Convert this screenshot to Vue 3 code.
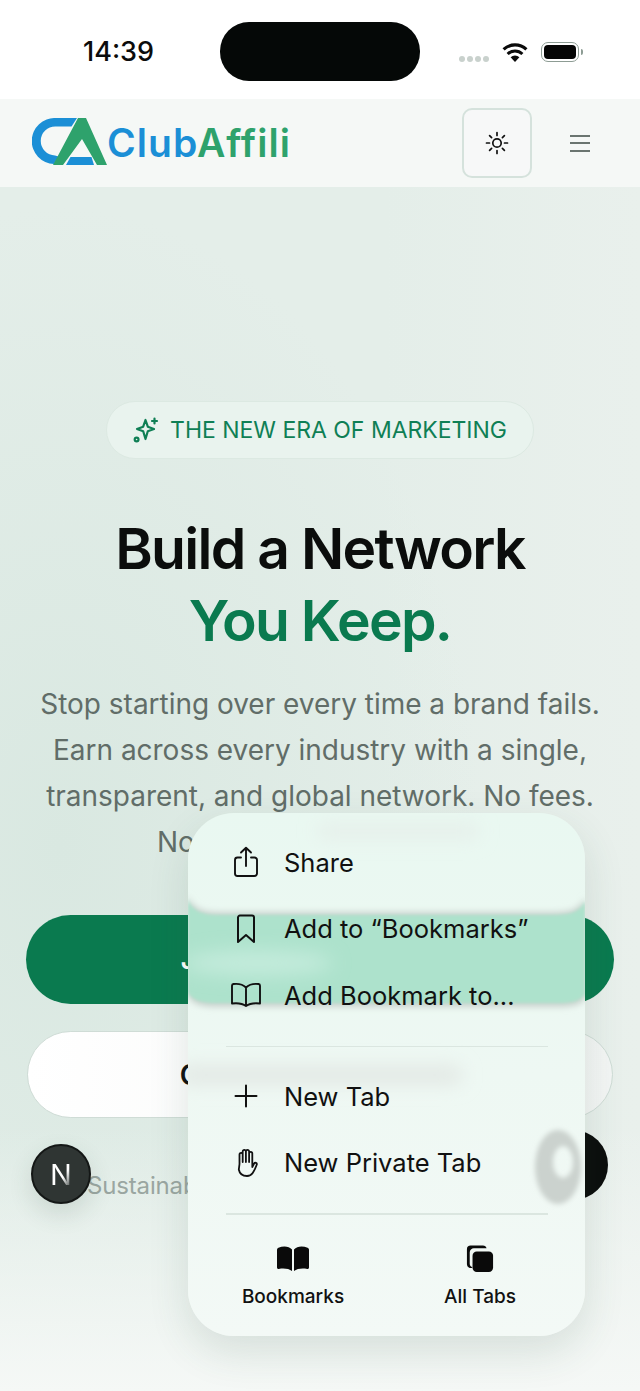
<script setup>
const topActions = [
  { id: "share", label: "Share" },
  { id: "bookmark", label: "Add to “Bookmarks”" },
  { id: "book", label: "Add Bookmark to..." },
];
const tabActions = [
  { id: "plus", label: "New Tab" },
  { id: "hand", label: "New Private Tab" },
];
</script>

<template>
  <div class="screen">
    <div class="status-bar">
      <span class="clock">14:39</span>
      <div class="island"></div>
      <div class="status-icons">
        <div class="signal"><i></i><i></i><i></i><i></i></div>
        <svg class="wifi" viewBox="0 0 26 20" width="26" height="20">
          <path d="M13 20 8.6 15.2a6.4 6.4 0 0 1 8.8 0Z" fill="#0a0a0a" />
          <path d="M5.6 12a10.8 10.8 0 0 1 14.8 0" fill="none" stroke="#0a0a0a" stroke-width="3" />
          <path d="M1.6 7.4a16.8 16.8 0 0 1 22.8 0" fill="none" stroke="#0a0a0a" stroke-width="3.2" />
        </svg>
        <div class="battery"><span></span></div>
        <div class="battery-nub"></div>
      </div>
    </div>

    <header class="nav">
      <div class="brand">
        <svg class="brand-mark" viewBox="32 119 76 47" width="76" height="47">
          <path d="M77 119 71.5 127.5H55.5A14.5 14.5 0 0 0 55 156.5L58.5 157.5 54 165A23 23 0 0 1 55.5 119Z" fill="#1b8fd6" />
          <path d="M78 119H86L107 166H97L82 140 63 166H53Z" fill="#2ea26c" />
          <path d="M70.5 158H91.5L94 166H66Z" fill="#1b8fd6" />
        </svg>
        <span class="brand-name"><span class="blue">Club</span><span class="green">Affili</span></span>
      </div>
      <div class="nav-actions">
        <button class="theme-btn">
          <svg viewBox="0 0 24 24" width="24" height="24" fill="none" stroke="#111" stroke-width="1.7" stroke-linecap="round">
            <circle cx="12" cy="12" r="4.2" />
            <path d="M12 1.5v3M12 19.5v3M1.5 12h3M19.5 12h3M4.6 4.6l2 2M17.4 17.4l2 2M4.6 19.4l2-2M17.4 6.6l2-2" />
          </svg>
        </button>
        <div class="burger"><i></i><i></i><i></i></div>
      </div>
    </header>

    <main class="hero">
      <div class="pill">
        <svg viewBox="0 0 26 26" width="26" height="26" fill="none" stroke="#0f7f55" stroke-width="2.2" stroke-linecap="round" stroke-linejoin="round">
          <path d="M12.500 3 14.800 9.700 21 12l-6.200 2.300L12.500 22l-2.300-7.700L4 12l6.200-2.300Z" />
          <path d="M21.500 1.500v5M19 4h5" />
          <circle cx="3.600" cy="22.500" r="1.900" />
        </svg>
        <span>THE NEW ERA OF MARKETING</span>
      </div>

      <h1>Build a Network<br /><em>You Keep.</em></h1>

      <p class="lead">
        Stop starting over every time a brand fails.<br />
        Earn across every industry with a single,<br />
        transparent, and global network. No fees.<br />
        No hidden requirements.
      </p>

      <div class="cta cta-primary">Join the Network Now</div>
      <div class="cta cta-secondary">Create Your Account</div>
      <p class="foot">Sustainable income for every new creator</p>
    </main>

    <div class="next-badge"><span>N</span></div>
    <div class="round-fab"></div>

    <div class="menu">
      <svg class="menu-glass" viewBox="0 0 397 523" width="397" height="523">
        <defs>
          <filter id="soft1"><feGaussianBlur stdDeviation="1.4" /></filter>
          <filter id="soft2" x="-20%" y="-20%" width="140%" height="140%"><feGaussianBlur stdDeviation="2.500" /></filter>
          <filter id="soft3" x="-20%" y="-20%" width="140%" height="140%"><feGaussianBlur stdDeviation="3" /></filter>
          <filter id="soft9" x="-30%" y="-300%" width="160%" height="700%"><feGaussianBlur stdDeviation="9" /></filter>
        </defs>
        <rect x="130" y="10" width="160" height="16" fill="#e6efea" filter="url(#soft9)" />
        <path d="M0 82C4 95 14 99 30 99H365C385 99 392 95 397 84V186C392 192 385 194 370 194H30C14 194 6 192 0 184Z" fill="#c9d3ce" filter="url(#soft3)" />
        <path d="M0 86C4 98 14 102 30 102H365C385 102 392 98 397 88V181C392 188 385 190 370 190H30C14 190 6 188 0 180Z" fill="#ade2cc" filter="url(#soft1)" />
        <ellipse cx="70" cy="150" rx="75" ry="13" fill="#c3ebdb" filter="url(#soft9)" />
        <rect x="-10" y="252" width="285" height="20" rx="10" fill="#e3e9e5" filter="url(#soft9)" />
        <path d="M370 317a23 37 0 1 1-.01 0ZM375 333a10 16 0 1 0 .01 0Z" fill="#cbd2ce" fill-rule="evenodd" filter="url(#soft2)" />
      </svg>

      <div class="menu-body">
        <div class="menu-group">
          <div v-for="item in topActions" :key="item.id" class="menu-row">
            <span class="menu-icon">
              <svg v-if="item.id === 'share'" viewBox="0 0 30 32" width="30" height="32" fill="none" stroke="#111" stroke-width="1.9" stroke-linecap="round" stroke-linejoin="round">
                <path d="M10 11.5H6.5A2.5 2.5 0 0 0 4 14v13.5A2.5 2.5 0 0 0 6.5 30h17a2.5 2.5 0 0 0 2.5-2.5V14a2.500 2.500 0 0 0-2.500-2.500H20" />
                <path d="M15 20V2M10 6.500 15 1.800l5 4.700" />
              </svg>
              <svg v-else-if="item.id === 'bookmark'" viewBox="0 0 20 30" width="20" height="30" fill="none" stroke="#111" stroke-width="2" stroke-linejoin="round">
                <path d="M2 3.500A2 2 0 0 1 4 1.500h12a2 2 0 0 1 2 2V28l-8-7-8 7Z" />
              </svg>
              <svg v-else viewBox="0 0 32 26" width="32" height="26" fill="none" stroke="#111" stroke-width="1.900" stroke-linejoin="round" stroke-linecap="round">
                <path d="M16 5.500C13 2.500 8 1.500 3.500 2 2.500 2.100 2 2.800 2 3.800V21.500c4.500-.5 10-.5 14 2.500 4-3 9.500-3 14-2.500V3.800c0-1-.5-1.700-1.500-1.800C24 1.500 19 2.500 16 5.500ZM16 5.500V24" />
              </svg>
            </span>
            <span>{{ item.label }}</span>
          </div>
        </div>
        <hr />
        <div class="menu-group">
          <div v-for="item in tabActions" :key="item.id" class="menu-row">
            <span class="menu-icon">
              <svg v-if="item.id === 'plus'" viewBox="0 0 24 24" width="24" height="24" stroke="#111" stroke-width="2" stroke-linecap="round">
                <path d="M12 1.500v21M1.500 12h21" />
              </svg>
              <svg v-else viewBox="0 0 24 30" width="24" height="30" fill="none" stroke="#111" stroke-width="1.800" stroke-linecap="round" stroke-linejoin="round">
                <path d="M5.500 16V6.500a1.600 1.600 0 0 1 3.200 0V14M8.700 14V3.500a1.600 1.600 0 0 1 3.200 0V14M11.900 14V3.500a1.600 1.600 0 0 1 3.200 0V14M15.100 14V5.500a1.600 1.600 0 0 1 3.200 0V19l1.800-3.500c.9-1.500 3.300-.6 2.600 1.200-1 2.800-2.400 6-4 8.300-1.200 1.700-3 3-5.700 3-4.500 0-7.500-2.800-8.200-6.500L5.500 16" />
              </svg>
            </span>
            <span>{{ item.label }}</span>
          </div>
        </div>
        <hr />
        <div class="menu-tabs">
          <div class="tab-item">
            <span class="tab-icon">
              <svg viewBox="0 0 32 26" width="32" height="26" fill="#0a0a0a">
                <path d="M15 3.500V25C12 22.800 7 22 1.800 23 .8 23.200 0 22.500 0 21.500V4C0 3 .5 2.200 1.500 1.800 6-.2 12 0 15 3.500ZM17 3.500V25c3-2.200 8-3 13.200-2 1 .2 1.800-.5 1.800-1.500V4c0-1-.5-1.800-1.500-2.200C26-.2 20 0 17 3.500Z" />
              </svg>
            </span>
            <span>Bookmarks</span>
          </div>
          <div class="tab-item">
            <span class="tab-icon">
              <svg viewBox="0 0 30 30" width="30" height="28" fill="#0a0a0a">
                <path d="M7 24.500A4 4 0 0 1 1 21V5a4 4 0 0 1 4-4h13a4 4 0 0 1 4 3H8.500A4.500 4.500 0 0 0 4 8.500V21a4 4 0 0 0 3 3.500Z" transform="translate(0 -.5)" />
                <rect x="7" y="7" width="22" height="22" rx="4.500" />
              </svg>
            </span>
            <span>All Tabs</span>
          </div>
        </div>
      </div>
    </div>
  </div>
</template>

<style>
body {
  background: #f6f9f7;
}
</style>

<style scoped>
.screen {
  position: relative;
  width: 640px;
  height: 1391px;
  overflow: hidden;
  font-family: Inter, "Noto Sans", sans-serif;
  background: #fff;
  display: flex;
  flex-direction: column;
}

/* status bar */
.status-bar {
  height: 99px;
  flex-shrink: 0;
  box-sizing: border-box;
  padding: 22px 0 0 83px;
  display: flex;
  align-items: flex-start;
  background: #fff;
}
.clock {
  width: 137px;
  flex-shrink: 0;
  margin-top: 13px;
  font-size: 27px;
  line-height: 34px;
  font-weight: 500;
  color: #0c0c0c;
}
.island {
  width: 200px;
  height: 59px;
  flex-shrink: 0;
  border-radius: 29px;
  background: #050807;
}
.status-icons {
  margin-left: 39px;
  margin-top: 20px;
  display: flex;
  align-items: center;
}
.signal {
  display: flex;
  gap: 2px;
  margin-top: 14px;
  margin-right: 13px;
}
.signal i {
  width: 6px;
  height: 6px;
  border-radius: 50%;
  background: #c9d1cd;
}
.battery {
  width: 38px;
  height: 20px;
  margin-left: 13px;
  box-sizing: border-box;
  border: 1.5px solid #8d9c94;
  border-radius: 7px;
  padding: 2px;
}
.battery span {
  display: block;
  height: 100%;
  border-radius: 4px;
  background: #050505;
}
.battery-nub {
  width: 2px;
  height: 6px;
  margin-left: 2px;
  border-radius: 0 2px 2px 0;
  background: #8d9c94;
}

/* nav */
.nav {
  height: 88px;
  flex-shrink: 0;
  box-sizing: border-box;
  padding: 0 50px 0 32px;
  display: flex;
  align-items: center;
  justify-content: space-between;
  background: #f5f8f6;
}
.brand {
  display: flex;
  align-items: center;
  margin-top: -3px;
}
.brand-mark {
  display: block;
}
.brand-name {
  margin-left: -1px;
  margin-top: 2px;
  font-size: 39px;
  line-height: 46px;
  font-weight: 600;
  letter-spacing: 1.05px;
}
.blue {
  color: #1b8fd6;
}
.green {
  color: #2ea26c;
}
.nav-actions {
  display: flex;
  align-items: center;
  gap: 38px;
}
.theme-btn {
  width: 70px;
  height: 70px;
  padding: 0;
  display: flex;
  align-items: center;
  justify-content: center;
  background: #f7f8f8;
  border: 2px solid #d5e2dc;
  border-radius: 10px;
}
.burger {
  width: 20px;
  display: flex;
  flex-direction: column;
  gap: 5.500px;
}
.burger i {
  display: block;
  height: 2px;
  background: #6a7570;
}

/* hero */
.hero {
  flex: 1;
  box-sizing: border-box;
  padding-top: 214px;
  display: flex;
  flex-direction: column;
  align-items: center;
  background:
    linear-gradient(180deg, rgba(246, 249, 247, 0) 78%, #f5f8f6 100%),
    radial-gradient(ellipse 420px 640px at 60px 660px, #d9e8e1 0%, rgba(217, 232, 225, 0) 100%),
    linear-gradient(90deg, #e4eee9 0%, #e4eee9 60%, #e9f0ec 100%);
}
.pill {
  width: 428px;
  height: 58px;
  box-sizing: border-box;
  display: flex;
  align-items: center;
  justify-content: center;
  gap: 11px;
  border: 1.500px solid #dce9e2;
  border-radius: 29px;
  background: #e9f3ee;
  color: #0f7f55;
  font-size: 23px;
  font-weight: 400;
}
.pill span {
  letter-spacing: -0.02px;
}
h1 {
  margin: 54px 0 0;
  text-align: center;
  font-size: 57px;
  line-height: 72px;
  font-weight: 600;
  letter-spacing: -1.700px;
  color: #0b0d0c;
}
h1 em {
  font-style: normal;
  color: #0a7a4f;
}
.lead {
  margin: 24px 0 0;
  text-align: center;
  white-space: nowrap;
  font-size: 28px;
  line-height: 46px;
  font-weight: 400;
  letter-spacing: -0.02px;
  color: #616d68;
}
.cta {
  box-sizing: border-box;
  display: flex;
  align-items: center;
  justify-content: center;
  font-weight: 600;
  border-radius: 45px;
}
.cta-primary {
  width: 588px;
  height: 89px;
  margin-top: 50px;
  background: #0a7a4f;
  color: #fff;
  font-size: 26px;
}
.cta-secondary {
  width: 586px;
  height: 87px;
  margin-top: 27px;
  background: linear-gradient(90deg, #fff, #f3f5f4);
  border: 1.500px solid #cfdcd6;
  color: #111;
  font-size: 28px;
}
.foot {
  margin: 52px 0 0;
  white-space: nowrap;
  font-size: 24px;
  line-height: 32px;
  letter-spacing: -0.15px;
  color: #9aa6a1;
}

/* floating bits */
.next-badge {
  position: absolute;
  left: 31px;
  top: 1144px;
  width: 60px;
  height: 60px;
  box-sizing: border-box;
  display: flex;
  align-items: center;
  justify-content: center;
  border: 2px solid #141716;
  border-radius: 50%;
  background: #2f3533;
  box-shadow: 0 10px 24px rgba(40, 70, 55, 0.14);
}
.next-badge span {
  font-size: 29px;
  font-weight: 400;
  background: linear-gradient(125deg, #fff 58%, #5f6563 85%);
  -webkit-background-clip: text;
  background-clip: text;
  color: transparent;
}
.round-fab {
  position: absolute;
  left: 538px;
  top: 1130px;
  width: 70px;
  height: 70px;
  border-radius: 50%;
  background: #0b0d0c;
}

/* safari menu */
.menu {
  position: absolute;
  left: 188px;
  top: 813px;
  width: 397px;
  height: 523px;
  overflow: hidden;
  border-radius: 46px;
  background: linear-gradient(180deg, #e9f8f1 0%, #eef8f3 50%, #f3f9f6 100%);
  box-shadow: 0 16px 40px rgba(50, 90, 70, 0.14);
}
.menu-glass {
  position: absolute;
  left: 0;
  top: 0;
}
.menu-body {
  position: relative;
  height: 100%;
  box-sizing: border-box;
  padding-top: 16px;
  display: flex;
  flex-direction: column;
}
.menu-row {
  height: 66.500px;
  padding-left: 38px;
  display: flex;
  align-items: center;
  gap: 19px;
  font-size: 25.500px;
  color: #111;
}
.menu-icon {
  width: 39px;
  display: flex;
  justify-content: center;
}
.menu-icon svg {
  display: block;
}
hr {
  width: 322px;
  height: 1.500px;
  flex-shrink: 0;
  margin: 17px 0 16px 38px;
  border: 0;
  background: #dbe6e0;
}
.menu-tabs {
  display: flex;
  margin-top: 14px;
  padding-left: 54px;
  gap: 100px;
}
.tab-item {
  width: 102px;
  display: flex;
  flex-direction: column;
  align-items: center;
  gap: 12px;
  font-size: 19px;
  line-height: 24px;
  font-weight: 500;
  color: #111;
  white-space: nowrap;
}
.tab-item + .tab-item {
  margin-left: -15px;
}
.tab-icon {
  height: 28px;
  display: flex;
  align-items: center;
}
.tab-icon svg {
  display: block;
}
</style>
